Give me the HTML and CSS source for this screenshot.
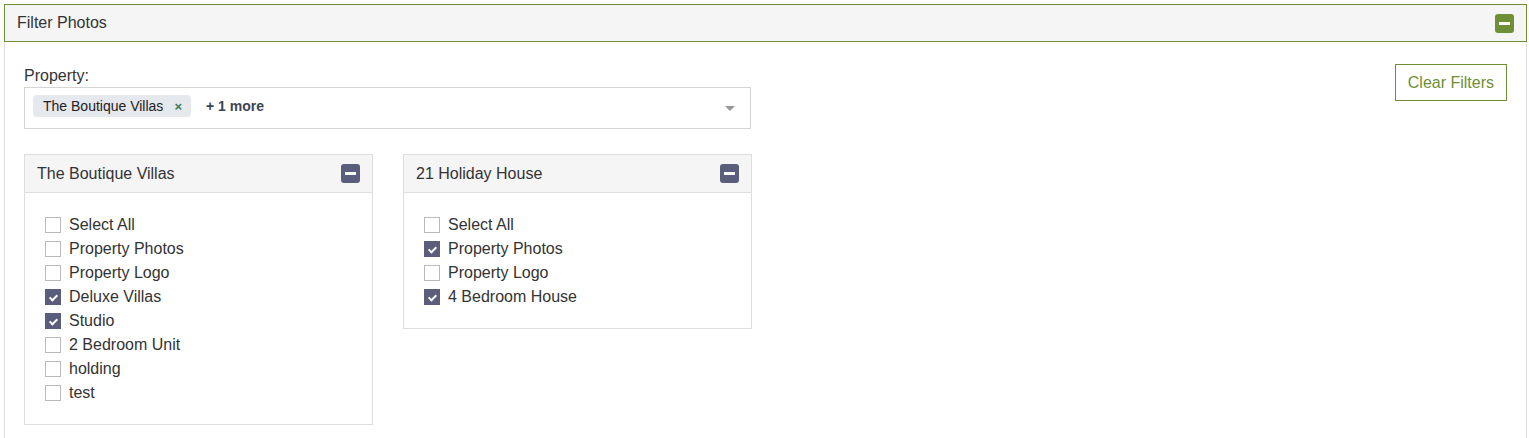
FILE: index.html
```html
<!DOCTYPE html>
<html lang="en">
<head>
    <meta charset="UTF-8">
    <meta name="viewport" content="width=device-width, initial-scale=1.0">
    <title>Filter Photos</title>
    <link rel="stylesheet" href="styles.css">
</head>
<body>

    <div class="panel">
        <div class="panel-head">
            <span>Filter Photos</span>
            <span class="toggle green"><span class="bar"></span></span>
        </div>
        <div class="panel-body">
            <div class="top-row">
                <div class="field">
                    <label class="field-label">Property:</label>
                    <div class="multi-select">
                        <span class="tag">The Boutique Villas <span class="tag-x">&times;</span></span>
                        <span class="more">+ 1 more</span>
                        <span class="caret"></span>
                    </div>
                </div>
                <button type="button" class="clear-btn">Clear Filters</button>
            </div>

            <div class="cards">
                <div class="card">
                    <div class="card-head">
                        <span>The Boutique Villas</span>
                        <span class="toggle slate"><span class="bar"></span></span>
                    </div>
                    <div class="card-body">
                        <label class="check"><span class="box"></span>Select All</label>
                        <label class="check"><span class="box"></span>Property Photos</label>
                        <label class="check"><span class="box"></span>Property Logo</label>
                        <label class="check"><span class="box on"></span>Deluxe Villas</label>
                        <label class="check"><span class="box on"></span>Studio</label>
                        <label class="check"><span class="box"></span>2 Bedroom Unit</label>
                        <label class="check"><span class="box"></span>holding</label>
                        <label class="check"><span class="box"></span>test</label>
                    </div>
                </div>

                <div class="card">
                    <div class="card-head">
                        <span>21 Holiday House</span>
                        <span class="toggle slate"><span class="bar"></span></span>
                    </div>
                    <div class="card-body">
                        <label class="check"><span class="box"></span>Select All</label>
                        <label class="check"><span class="box on"></span>Property Photos</label>
                        <label class="check"><span class="box"></span>Property Logo</label>
                        <label class="check"><span class="box on"></span>4 Bedroom House</label>
                    </div>
                </div>
            </div>
        </div>
    </div>

</body>
</html>
```

FILE: styles.css
```css
body {
    font-family: 'Liberation Sans', Arial, sans-serif;
    margin: 0;
    padding: 4px 2px 0 4px;
    background-color: #fff;
    color: #333;
}

.panel {
    border: 1px solid #ddd;
    border-top: none;
    min-height: 440px;
}

.panel-head {
    display: flex;
    justify-content: space-between;
    align-items: center;
    height: 36px;
    padding: 0 12px 0 12px;
    margin: 0 -1px;
    background-color: #f5f5f5;
    border: 1px solid #6e8f35;
    font-size: 16px;
}

.toggle {
    position: relative;
    display: inline-block;
    width: 19px;
    height: 19px;
    border-radius: 3px;
}

.toggle.green {
    background-color: #6e8f35;
}

.toggle.slate {
    background-color: #5a5d7c;
}

.toggle .bar {
    position: absolute;
    left: 4px;
    right: 4px;
    top: 8px;
    height: 3px;
    background-color: #fff;
}

.panel-body {
    padding: 21px 19px 0 19px;
}

.top-row {
    display: flex;
    justify-content: space-between;
    align-items: flex-start;
}

.field-label {
    display: block;
    font-size: 16px;
    line-height: 18px;
    margin: 4px 0 2px 0;
}

.multi-select {
    position: relative;
    display: flex;
    align-items: center;
    width: 709px;
    height: 40px;
    border: 1px solid #d4d4d4;
    padding: 0 8px;
}

.tag {
    display: inline-flex;
    align-items: center;
    height: 22px;
    padding: 0 9px 0 10px;
    background-color: #e5e8ec;
    border-radius: 4px;
    font-size: 14px;
    color: #222;
    margin-top: -4px;
}

.tag-x {
    margin-left: 11px;
    color: #3b7a57;
    font-weight: bold;
    font-size: 13px;
}

.more {
    margin-left: 15px;
    font-size: 14px;
    font-weight: bold;
    color: #3a4452;
    margin-top: -4px;
}

.caret {
    position: absolute;
    right: 15px;
    top: 18px;
    width: 0;
    height: 0;
    border-left: 5px solid transparent;
    border-right: 5px solid transparent;
    border-top: 5px solid #999;
}

.clear-btn {
    font-family: 'Liberation Sans', Arial, sans-serif;
    height: 37px;
    padding: 0 12px;
    margin-top: 1px;
    background-color: #fff;
    color: #6e8f35;
    font-size: 16px;
    border: 1px solid #6e8f35;
    cursor: pointer;
}

.cards {
    display: flex;
    align-items: flex-start;
    gap: 30px;
    margin-top: 25px;
}

.card {
    width: 347px;
    border: 1px solid #ddd;
}

.card-head {
    display: flex;
    justify-content: space-between;
    align-items: center;
    height: 37px;
    padding: 0 12px;
    background-color: #f5f5f5;
    border-bottom: 1px solid #ddd;
    font-size: 16px;
}

.card-body {
    padding: 20px 20px 19px 20px;
}

.check {
    display: flex;
    align-items: center;
    height: 24px;
    font-size: 16px;
}

.box {
    position: relative;
    width: 14px;
    height: 14px;
    border: 1px solid #bbb;
    margin-right: 8px;
    background-color: #fff;
}

.box.on {
    background-color: #5a5d7c;
    border-color: #5a5d7c;
}

.box.on::after {
    content: "";
    position: absolute;
    left: 5px;
    top: 3px;
    width: 3px;
    height: 6px;
    border: solid #fff;
    border-width: 0 2px 2px 0;
    transform: rotate(45deg);
}
```
